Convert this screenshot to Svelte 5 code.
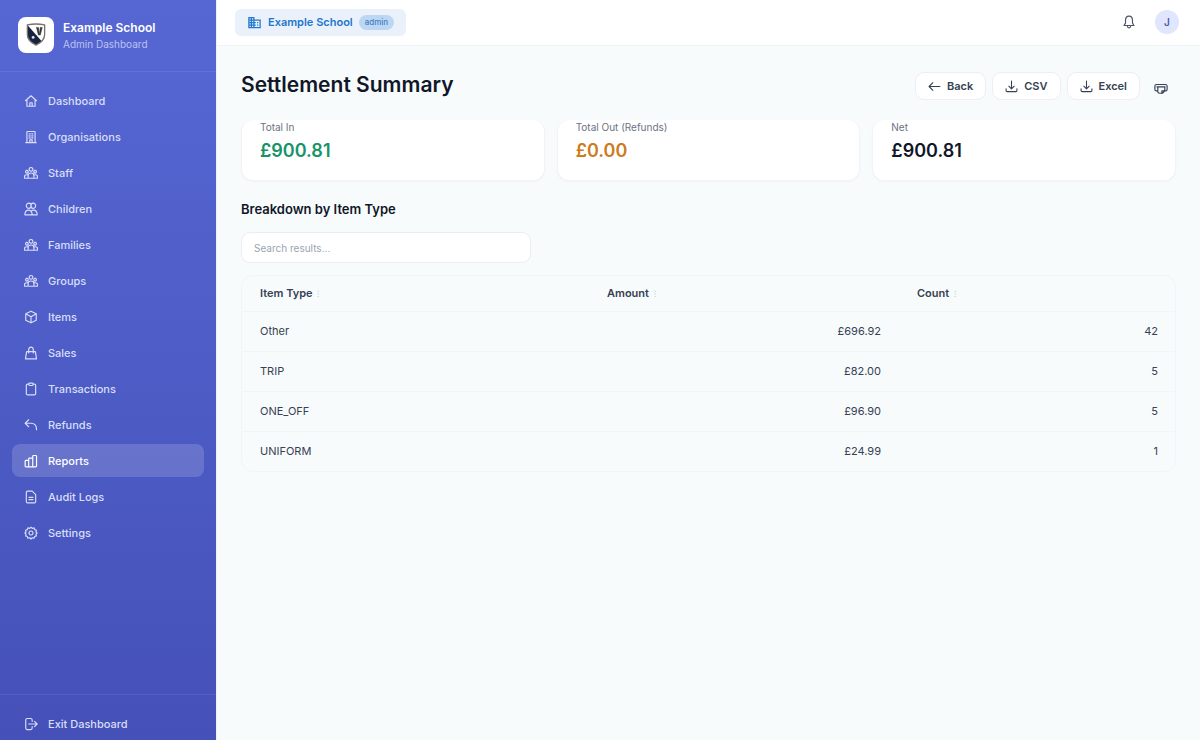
<script lang="ts">
  interface NavItem {
    label: string;
    icon: string;
  }

  interface Row {
    type: string;
    amount: number;
    count: number;
  }

  const icons: Record<string, string> = {
    home: 'M2.5 11.5 12 3l9.5 8.5M5 9.5V21h14V9.5M10 21v-6h4v6',
    building: 'M3 21.5h18M5 21.5V3.5q0-1 1-1h12q1 0 1 1v18M10 21.5V17h4v4.5M9 6v1M12 6v1M15 6v1M9 9.5v1M12 9.5v1M15 9.5v1M9 13v1M12 13v1M15 13v1',
    group: 'M12 2.5a3.2 3.2 0 1 0 .01 0M5 7.5a2.3 2.3 0 1 0 .01 0M19 7.5a2.3 2.3 0 1 0 .01 0M7 21v-5q0-4 5-4t5 4v5zM7 21H1v-3q0-3 4-3 1.5 0 2.4.6M17 21h6v-3q0-3-4-3-1.5 0-2.4.6',
    children: 'M8.5 2a4 4 0 1 0 .01 9q3.5 0 3.5-4.500t-3.5-4.500M15.5 2a4 4 0 1 1-.01 9q-3.5 0-3.5-4.500t3.5-4.500M1.500 22q0-8 6.500-8 2 0 4 2 2-2 4-2 6.500 0 6.500 8zM12 16q2 2 2 5',
    cube: 'M12 2 21 6.500v11L12 22l-9-4.500v-11zM3 6.500l9 5 9-5M12 11.500V22',
    bag: 'M4.5 9.5h15L21.500 22h-19zM8 12V7q0-5 4-5t4 5v5',
    clipboard: 'M8.5 3.500H6q-2 0-2 2V20q0 2 2 2h12q2 0 2-2V5.500q0-2-2-2h-2.5M8.5 3q0-1 1-1h5q1 0 1 1v1.5q0 1.5-1.5 1.5h-4q-1.5 0-1.5-1.5z',
    reply: 'M8 3 2 9l6 6M2 9h10q9.5 0 9.5 11',
    chart: 'M2 12.5q0-1.5 1.5-1.5H8v11H3.5Q2 22 2 20.5zM8 8.5Q8 7 9.5 7H15v15H8zM15 4q0-1.500 1.5-1.500H20q1.500 0 1.500 1.500v16.500q0 1.500-1.500 1.500h-5z',
    document: 'M6 2h8l6 6v12q0 2-2 2H6q-2 0-2-2V4q0-2 2-2M8.5 12.5h7M8.5 16.5h7',
    gear: 'M12 1.8l2.2 2.3 3.1-.8 1 3 3 1-.8 3.1L22.5 12l-2 2 .8 3-3 1-1 3-3.1-.8L12 22.300l-2.200-2.100-3.100.8-1-3-3-1 .8-3L1.500 12l2-1.600-.8-3.100 3-1 1-3 3.100.8zM12 8.500a3.500 3.500 0 1 0 .01 0',
    exit: 'M14 7.5V5q0-2.500-2.500-2.500h-6Q3 2.500 3 5v14q0 2.500 2.500 2.500h6Q14 21.500 14 19v-2.500M8 12h14.500M18 7.500l4.500 4.500-4.500 4.500',
    back: 'M22 12H2M9 5l-7 7 7 7',
    download: 'M12 2v14M7 11.500l5 5 5-5M2 16v3.500Q2 21.500 4 21.500h16q2 0 2-2V16',
    bell: 'M12 2q-6 0-6 7.500V14l-2.500 4h17L18 14V9.500Q18 2 12 2M9 18.500q.500 3.500 3 3.500t3-3.500',
    printer: 'M6 17H4q-2.500 0-2.500-3V9q0-3 3-3h15q3 0 3 3v5q0 3-2.500 3h-2M6.500 10v8q0 3 3 3h5l4-4v-7M5 10h14M13.500 21v-4H18',
  };

  const navItems: NavItem[] = [
    { label: 'Dashboard', icon: 'home' },
    { label: 'Organisations', icon: 'building' },
    { label: 'Staff', icon: 'group' },
    { label: 'Children', icon: 'children' },
    { label: 'Families', icon: 'group' },
    { label: 'Groups', icon: 'group' },
    { label: 'Items', icon: 'cube' },
    { label: 'Sales', icon: 'bag' },
    { label: 'Transactions', icon: 'clipboard' },
    { label: 'Refunds', icon: 'reply' },
    { label: 'Reports', icon: 'chart' },
    { label: 'Audit Logs', icon: 'document' },
    { label: 'Settings', icon: 'gear' },
  ];

  const rows: Row[] = [
    { type: 'Other', amount: 696.92, count: 42 },
    { type: 'TRIP', amount: 82, count: 5 },
    { type: 'ONE_OFF', amount: 96.9, count: 5 },
    { type: 'UNIFORM', amount: 24.99, count: 1 },
  ];

  const summary = [
    { label: 'Total In', value: 900.81, tone: 'positive' },
    { label: 'Total Out (Refunds)', value: 0, tone: 'warning' },
    { label: 'Net', value: 900.81, tone: 'neutral' },
  ];

  let active = $state('Reports');
  let search = $state('');
  let filtered = $derived(
    rows.filter((row) => row.type.toLowerCase().includes(search.trim().toLowerCase()))
  );

  function formatMoney(value: number): string {
    return `£${value.toFixed(2)}`;
  }
</script>

{#snippet icon(name: string)}
  <svg class="icon" viewBox="0 0 24 24" aria-hidden="true"><path d={icons[name]} /></svg>
{/snippet}

<div class="layout">
  <aside class="sidebar">
    <div class="brand">
      <div class="logo">
        <svg viewBox="0 0 20 24" aria-hidden="true">
          <path d="M1 2q9-2 18 0v10q0 7-9 11-9-4-9-11z" fill="#fff" />
          <path d="M1 2v10q0 7 9 11 4-2 6-4z" fill="#17233f" />
          <path d="M10.500 4.500q1 1 2 0l1 8h-1zM16.500 4.500q-1 1-2 0l-1 8h1z" fill="#333" stroke="#333" stroke-width="0.600" />
          <circle cx="7" cy="15" r="1.500" fill="#dfe5ee" />
          <path d="M1 2q9-2 18 0v10q0 7-9 11-9-4-9-11z" fill="none" stroke="#77736c" stroke-width="1.400" />
        </svg>
      </div>
      <div class="brand-text">
        <strong>Example School</strong>
        <span>Admin Dashboard</span>
      </div>
    </div>

    <nav>
      {#each navItems as item}
        <a
          href="#{item.label}"
          class="nav-item"
          class:active={active === item.label}
          onclick={() => (active = item.label)}
        >
          {@render icon(item.icon)}
          {item.label}
        </a>
      {/each}
    </nav>

    <div class="sidebar-footer">
      <a href="#exit" class="nav-item">
        {@render icon('exit')}
        Exit Dashboard
      </a>
    </div>
  </aside>

  <div class="page">
    <header class="topbar">
      <button class="org">
        <svg class="org-icon" viewBox="0 0 24 24" aria-hidden="true">
          <path fill-rule="evenodd" d="M12 7V3H2v18h20V7zM6 19H4v-2h2zm0-4H4v-2h2zm0-4H4V9h2zm0-4H4V5h2zm4 12H8v-2h2zm0-4H8v-2h2zm0-4H8V9h2zm0-4H8V5h2zm10 12h-8v-2h2v-2h-2v-2h2v-2h-2V9h8zm-2-8h-2v2h2zm0 4h-2v2h2z" />
        </svg>
        Example School
        <span class="role">admin</span>
      </button>
      <div class="topbar-right">
        <button class="icon-button" aria-label="Notifications">{@render icon('bell')}</button>
        <button class="avatar" aria-label="Account">J</button>
      </div>
    </header>

    <main>
      <div class="page-header">
        <h1>Settlement Summary</h1>
        <div class="actions">
          <button class="btn">{@render icon('back')} Back</button>
          <button class="btn">{@render icon('download')} CSV</button>
          <button class="btn">{@render icon('download')} Excel</button>
          <button class="icon-button print" aria-label="Print">{@render icon('printer')}</button>
        </div>
      </div>

      <div class="cards">
        {#each summary as card}
          <div class="card">
            <div class="card-label">{card.label}</div>
            <div class="card-value {card.tone}">{formatMoney(card.value)}</div>
          </div>
        {/each}
      </div>

      <h2>Breakdown by Item Type</h2>

      <input
        class="search"
        type="text"
        placeholder="Search results..."
        aria-label="Search results"
        bind:value={search}
      />

      <div class="table-wrap">
        <table>
          <thead>
            <tr>
              <th class="col-type">Item Type <span class="sort">⁝</span></th>
              <th class="col-amount">Amount <span class="sort">⁝</span></th>
              <th class="col-count">Count <span class="sort">⁝</span></th>
            </tr>
          </thead>
          <tbody>
            {#each filtered as row}
              <tr>
                <td>{row.type}</td>
                <td class="num">{formatMoney(row.amount)}</td>
                <td class="num">{row.count}</td>
              </tr>
            {/each}
          </tbody>
        </table>
      </div>
    </main>
  </div>
</div>

<style>
  :global(body) {
    margin: 0;
    background: #f8fbfc;
  }

  .layout {
    display: flex;
    min-height: 100vh;
    font-family: Inter, 'Liberation Sans', sans-serif;
    font-size: 11px;
    line-height: 16px;
    color: #364153;
  }

  .layout * {
    box-sizing: border-box;
  }

  button,
  input {
    font: inherit;
    color: inherit;
  }

  button {
    cursor: pointer;
  }

  .icon {
    width: 14px;
    height: 14px;
    flex-shrink: 0;
    fill: none;
    stroke: currentColor;
    stroke-width: 2;
    stroke-linecap: round;
    stroke-linejoin: round;
  }

  .sidebar {
    position: sticky;
    top: 0;
    width: 216px;
    height: 100vh;
    flex-shrink: 0;
    display: flex;
    flex-direction: column;
    background: linear-gradient(180deg, #5667d4 0%, #4551b8 100%);
    color: #d9def7;
  }

  .brand {
    display: flex;
    align-items: center;
    gap: 9px;
    height: 72px;
    padding: 0 18px 2px;
    border-bottom: 1px solid rgba(255, 255, 255, 0.08);
  }

  .logo {
    display: flex;
    align-items: center;
    justify-content: center;
    width: 36px;
    height: 36px;
    background: white;
    border-radius: 8px;
  }

  .logo svg {
    width: 20px;
    height: 23px;
  }

  .brand-text {
    display: flex;
    flex-direction: column;
    padding-top: 2px;
  }

  .brand-text strong {
    font-size: 12px;
    font-weight: 600;
    color: white;
  }

  .brand-text span {
    font-size: 10px;
    color: #bbc3f0;
  }

  nav {
    flex: 1;
    display: flex;
    flex-direction: column;
    gap: 3px;
    padding: 12px;
    overflow: hidden;
  }

  .nav-item {
    display: flex;
    align-items: center;
    gap: 10px;
    height: 33px;
    flex-shrink: 0;
    padding: 0 12px;
    border-radius: 8px;
    font-weight: 500;
    color: inherit;
    text-decoration: none;
  }

  .nav-item:hover {
    background: rgba(255, 255, 255, 0.08);
  }

  .nav-item.active {
    background: rgba(255, 255, 255, 0.16);
    color: white;
  }

  .sidebar-footer {
    padding: 12px 12px 0;
    border-top: 1px solid rgba(255, 255, 255, 0.08);
  }

  .page {
    flex: 1;
    min-width: 0;
    border-left: 1px solid #eef1f8;
  }

  .topbar {
    display: flex;
    align-items: center;
    justify-content: space-between;
    height: 46px;
    padding: 0 21px 1px 18px;
    background: white;
    border-bottom: 1px solid #f0f3f6;
  }

  .org {
    display: flex;
    align-items: center;
    gap: 6px;
    height: 27px;
    padding: 0 12px;
    border: none;
    border-radius: 6px;
    background: #eaf1fb;
    color: #2277cd;
    font-weight: 600;
  }

  .org-icon {
    width: 15px;
    height: 15px;
    fill: currentColor;
  }

  .role {
    padding: 0 6px;
    border-radius: 8px;
    background: #bcd7f4;
    color: #4480bf;
    font-size: 8px;
    font-weight: 500;
    line-height: 15px;
  }

  .topbar-right {
    display: flex;
    align-items: center;
    gap: 16px;
  }

  .icon-button {
    display: flex;
    align-items: center;
    justify-content: center;
    width: 20px;
    height: 24px;
    padding: 0;
    border: none;
    background: none;
    color: #4a5565;
  }

  .avatar {
    width: 24px;
    height: 24px;
    padding: 0;
    border: none;
    border-radius: 50%;
    background: #dfe6fd;
    color: #4d58b5;
    font-size: 10px;
    font-weight: 600;
  }

  main {
    padding: 24px;
  }

  .page-header {
    display: flex;
    align-items: flex-end;
    justify-content: space-between;
    margin-bottom: 20px;
  }

  h1 {
    margin: 0;
    font-size: 21px;
    font-weight: 600;
    line-height: 30px;
    color: #101729;
  }

  .actions {
    display: flex;
    align-items: flex-end;
    gap: 6px;
  }

  .btn {
    display: flex;
    align-items: center;
    gap: 6px;
    height: 28px;
    padding: 0 12px;
    border: 1px solid #ebeff3;
    border-radius: 9px;
    background: white;
    font-weight: 600;
  }

  .btn .icon {
    width: 13px;
    height: 13px;
  }

  .print {
    width: 30px;
    color: #364153;
  }

  .cards {
    display: grid;
    grid-template-columns: repeat(3, 1fr);
    gap: 12px;
  }

  .card {
    padding: 0 18px 17px;
    border: 1px solid #f0f4f7;
    border-top: none;
    border-radius: 12px;
    background: white;
    box-shadow: 0 1px 2px rgba(16, 24, 40, 0.03);
  }

  .card-label {
    font-size: 10px;
    line-height: 15px;
    color: #6a7282;
  }

  .card-value {
    margin-top: 4px;
    font-size: 18px;
    font-weight: 600;
    line-height: 24px;
  }

  .positive {
    color: #169468;
  }

  .warning {
    color: #cd7b1c;
  }

  .neutral {
    color: #101729;
  }

  h2 {
    margin: 18px 0 12px;
    font-size: 13px;
    font-weight: 600;
    line-height: 21px;
    color: #101729;
  }

  .search {
    display: block;
    width: 290px;
    max-width: 100%;
    height: 31px;
    margin-bottom: 12px;
    padding: 0 12px;
    border: 1px solid #e9eef2;
    border-radius: 9px;
    background: white;
    font-size: 10px;
  }

  .search::placeholder {
    color: #99a4b3;
    opacity: 1;
  }

  .table-wrap {
    border: 1px solid #f1f5f8;
    border-radius: 12px;
    overflow: hidden;
  }

  table {
    width: 100%;
    table-layout: fixed;
    border-collapse: collapse;
  }

  th,
  td {
    padding: 0 18px;
    text-align: left;
    font-weight: 400;
  }

  th {
    height: 35px;
    font-weight: 600;
  }

  td {
    height: 40px;
    border-top: 1px solid #f1f5f8;
  }

  .col-type {
    width: 347px;
  }

  .col-amount {
    width: 310px;
  }

  .col-count {
    width: 277px;
  }

  .num {
    text-align: right;
  }

  .sort {
    margin-left: 2px;
    font-size: 9px;
    font-weight: 400;
    color: #c5ccd6;
  }

  @media (max-width: 768px) {
    .cards {
      grid-template-columns: 1fr;
    }
  }
</style>
